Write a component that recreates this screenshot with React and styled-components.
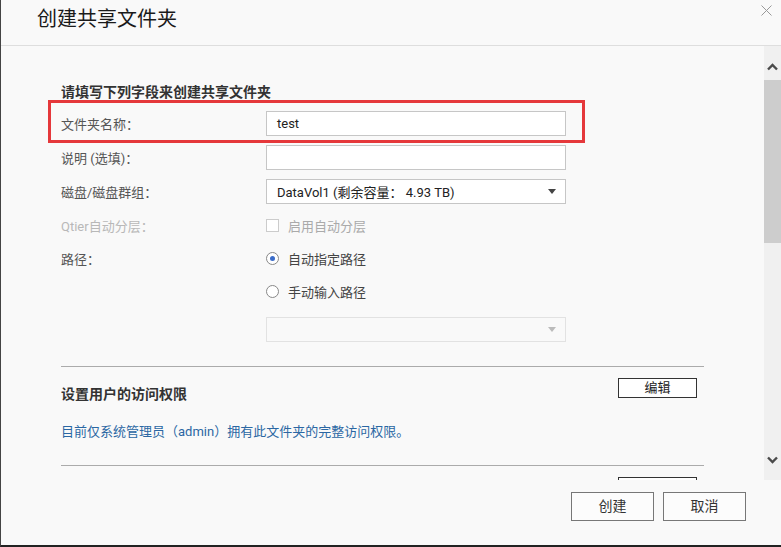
import React from 'react';
import styled, { createGlobalStyle } from 'styled-components';

const GlobalStyle = createGlobalStyle`
    html, body {
        margin: 0;
        padding: 0;
        background: #f9f9f9;
    }
    body {
        font-family: Roboto, "Noto Sans CJK SC", sans-serif;
    }
`;

const Frame = styled.div`
    width: 781px;
    height: 547px;
    box-sizing: border-box;
    display: flex;
    flex-direction: column;
    background: #f9f9f9;
    border-left: 1px solid #444;
    border-bottom: 2px solid #222;
    overflow: hidden;
`;

const Header = styled.div`
    height: 45px;
    flex-shrink: 0;
    display: flex;
    justify-content: space-between;
    align-items: flex-start;
    padding: 0 9px 0 36px;
    border-bottom: 1px solid #dedede;
`;

const Title = styled.div`
    font-size: 20px;
    line-height: 20px;
    margin-top: 9px;
    color: #1a1a1a;
`;

const Close = styled.div`
    margin-top: 5px;
    width: 11px;
    height: 11px;
    svg { display: block; }
`;

const Middle = styled.div`
    height: 434px;
    flex-shrink: 0;
    display: flex;
`;

const Scroll = styled.div`
    flex: 1;
    overflow: hidden;
    padding: 38px 0 0 60px;
    box-sizing: border-box;
`;

const Column = styled.div`
    width: 643px;
    display: flex;
    flex-direction: column;
`;

const Heading = styled.div`
    font-size: 14px;
    line-height: 16px;
    font-weight: bold;
    color: #333;
`;

const Highlight = styled.div`
    width: 537px;
    height: 43px;
    box-sizing: border-box;
    margin: 0 0 -3px -13px;
    border: 3px solid #e5383b;
    padding: 4px 0 0 10px;
    display: flex;
`;

const Row = styled.div`
    display: flex;
    align-items: center;
    height: ${p => p.h || 34}px;
    margin-top: ${p => p.mt || 0}px;
`;

const Label = styled.div`
    width: 205px;
    flex-shrink: 0;
    font-size: 13px;
    color: ${p => (p.disabled ? '#b8b8b8' : '#555')};
`;

const Input = styled.div`
    width: 300px;
    height: 25px;
    box-sizing: border-box;
    border: 1px solid ${p => (p.disabled ? '#e2e2e2' : '#c6c6c6')};
    background: ${p => (p.disabled ? '#f9f9f9' : '#fff')};
    display: flex;
    align-items: center;
    justify-content: space-between;
    padding: 0 9px 0 10px;
    font-size: 13px;
    color: #222;
`;

const Caret = styled.span`
    width: 0;
    height: 0;
    border-left: 4px solid transparent;
    border-right: 4px solid transparent;
    border-top: 5px solid ${p => (p.disabled ? '#bbb' : '#444')};
`;

const Choice = styled.label`
    display: flex;
    align-items: center;
    gap: 9px;
    font-size: 13px;
    color: ${p => (p.disabled ? '#aaa' : '#444')};
`;

const Box = styled.span`
    width: 11px;
    height: 11px;
    border: 1px solid #ccc;
    background: #fff;
`;

const Radio = styled.span`
    width: 11px;
    height: 11px;
    border: 1px solid #888;
    border-radius: 50%;
    background: #fff;
    display: flex;
    align-items: center;
    justify-content: center;
    &::after {
        content: '';
        width: 5px;
        height: 5px;
        border-radius: 50%;
        background: ${p => (p.checked ? '#3b6cc9' : 'transparent')};
    }
`;

const Rule = styled.div`
    height: 1px;
    background: #ababab;
    margin-top: ${p => p.mt}px;
`;

const Section = styled.div`
    display: flex;
    justify-content: space-between;
    align-items: flex-start;
    padding-right: 7px;
    margin-top: 11px;
`;

const SectionTitle = styled(Heading)`
    margin-top: 8px;
`;

const SmallButton = styled.div`
    width: 79px;
    height: 20px;
    box-sizing: border-box;
    border: 1px solid #333;
    background: #fff;
    font-size: 13px;
    line-height: 18px;
    text-align: center;
    color: #222;
`;

const Note = styled.div`
    margin-top: 20px;
    font-size: 13px;
    line-height: 20px;
    color: #2b67a3;
`;

const Scrollbar = styled.div`
    width: 17px;
    flex-shrink: 0;
    background: #f0f0f0;
    display: flex;
    flex-direction: column;
    align-items: center;
    padding: 17px 0 16px;
    box-sizing: border-box;
`;

const Arrow = styled.div`
    height: 17px;
    display: flex;
    align-items: ${p => (p.down ? 'flex-end' : 'flex-start')};
    svg { display: block; }
`;

const Thumb = styled.div`
    width: 17px;
    height: 163px;
    background: #cdcdcd;
`;

const Spacer = styled.div`
    flex: 1;
`;

const Footer = styled.div`
    flex: 1;
    display: flex;
    justify-content: flex-end;
    align-items: flex-start;
    gap: 9px;
    padding: 12px 35px 0 0;
`;

const Button = styled.div`
    width: 83px;
    height: 29px;
    box-sizing: border-box;
    border: 1px solid #777;
    background: #fcfcfc;
    font-size: 14px;
    line-height: 27px;
    text-align: center;
    color: #333;
`;

const App = () => (
    <Frame>
        <GlobalStyle />
        <Header>
            <Title>创建共享文件夹</Title>
            <Close>
                <svg width="11" height="11" viewBox="0 0 11 11">
                    <path d="M0.5 0.5L10.5 10.5M10.5 0.5L0.5 10.5" stroke="#999" strokeWidth="1" />
                </svg>
            </Close>
        </Header>
        <Middle>
            <Scroll>
                <Column>
                    <Heading>请填写下列字段来创建共享文件夹</Heading>
                    <Highlight>
                        <Row h={33}>
                            <Label>文件夹名称：</Label>
                            <Input>test</Input>
                        </Row>
                    </Highlight>
                    <Row>
                        <Label>说明 (选填)：</Label>
                        <Input />
                    </Row>
                    <Row>
                        <Label>磁盘/磁盘群组：</Label>
                        <Input>
                            <span>DataVol1 (剩余容量： 4.93 TB)</span>
                            <Caret />
                        </Input>
                    </Row>
                    <Row>
                        <Label disabled>Qtier自动分层：</Label>
                        <Choice disabled>
                            <Box />
                            启用自动分层
                        </Choice>
                    </Row>
                    <Row h={33}>
                        <Label>路径：</Label>
                        <Choice>
                            <Radio checked />
                            自动指定路径
                        </Choice>
                    </Row>
                    <Row h={32}>
                        <Label />
                        <Choice>
                            <Radio />
                            手动输入路径
                        </Choice>
                    </Row>
                    <Row h={25} mt={10}>
                        <Label />
                        <Input disabled>
                            <span />
                            <Caret disabled />
                        </Input>
                    </Row>
                    <Rule mt={24} />
                    <Section>
                        <SectionTitle>设置用户的访问权限</SectionTitle>
                        <SmallButton>编辑</SmallButton>
                    </Section>
                    <Note>目前仅系统管理员（admin）拥有此文件夹的完整访问权限。</Note>
                    <Rule mt={23} />
                    <Section>
                        <SectionTitle />
                        <SmallButton />
                    </Section>
                </Column>
            </Scroll>
            <Scrollbar>
                <Arrow>
                    <svg width="11" height="8" viewBox="0 0 11 8">
                        <path d="M1 6.5L5.5 2L10 6.5" stroke="#4a4a4a" strokeWidth="2.4" fill="none" />
                    </svg>
                </Arrow>
                <Thumb />
                <Spacer />
                <Arrow down>
                    <svg width="11" height="8" viewBox="0 0 11 8">
                        <path d="M1 1.5L5.5 6L10 1.5" stroke="#4a4a4a" strokeWidth="2.4" fill="none" />
                    </svg>
                </Arrow>
            </Scrollbar>
        </Middle>
        <Footer>
            <Button>创建</Button>
            <Button>取消</Button>
        </Footer>
    </Frame>
);

export default App;
